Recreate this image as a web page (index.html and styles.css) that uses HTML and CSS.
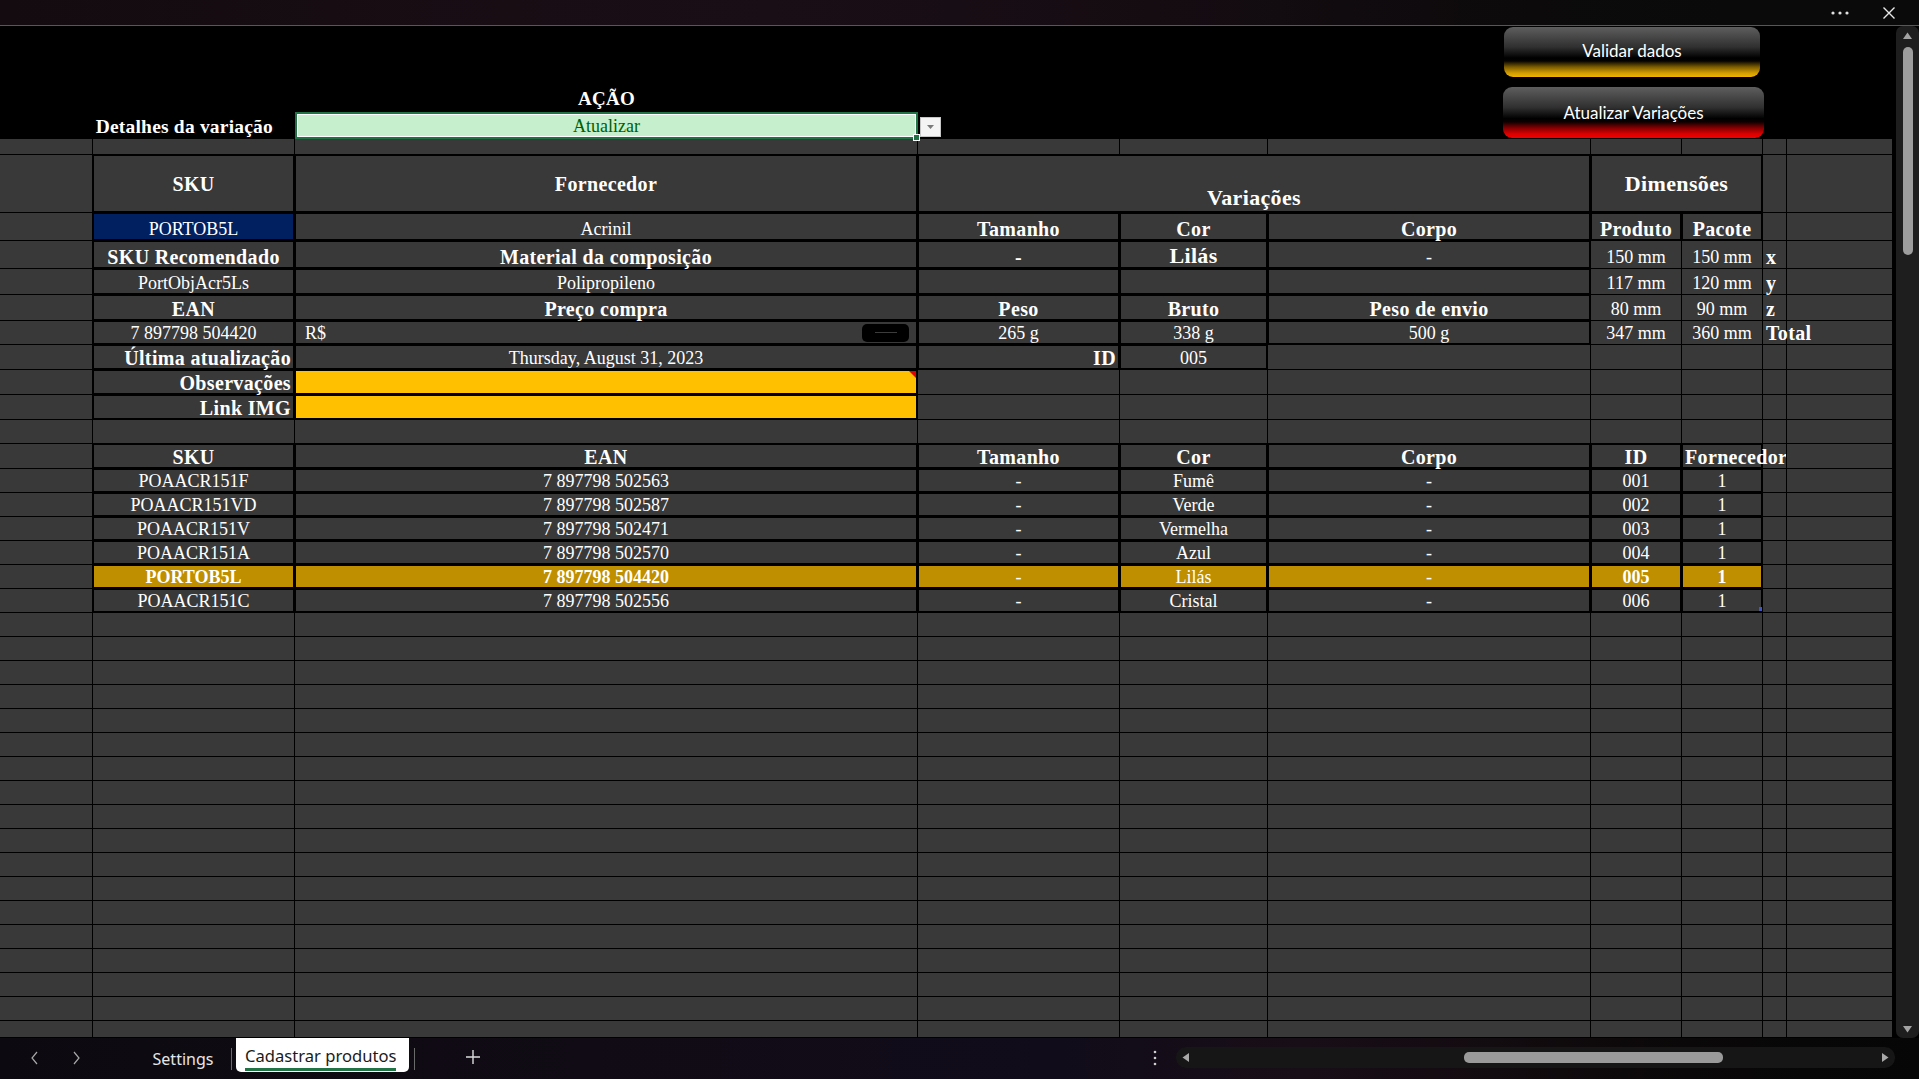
FILE: index.html
```html
<!DOCTYPE html>
<html lang="pt">
<head>
<meta charset="utf-8">
<title>Cadastrar produtos</title>
<link rel="stylesheet" href="styles.css">
</head>
<body>
<div class="app">
  <header class="titlebar">
    <svg class="ico-more" width="18" height="4" viewBox="0 0 18 4"><circle cx="2" cy="2" r="1.6"/><circle cx="9" cy="2" r="1.6"/><circle cx="16" cy="2" r="1.6"/></svg>
    <svg class="ico-close" width="12" height="12" viewBox="0 0 12 12"><path d="M0.5 0.5 L11.5 11.5 M11.5 0.5 L0.5 11.5"/></svg>
  </header>

  <div class="main">
    <div class="sheet">
      <div class="top">
        <div class="t-acao">AÇÃO</div>
        <div class="t-label">Detalhes da variação</div>
        <div class="t-action">Atualizar</div>
        <div class="t-dd"><span class="dd-btn"><svg width="7" height="4" viewBox="0 0 7 4"><path d="M0 0 H7 L3.5 4 Z"/></svg></span></div>
        <button class="shape shape-gold">Validar dados</button>
        <button class="shape shape-red">Atualizar Variações</button>
      </div>

      <div class="grid">
        <!-- r1 -->
        <div class="c"></div><div class="c"></div><div class="c"></div><div class="c"></div><div class="c"></div><div class="c"></div><div class="c"></div><div class="c"></div><div class="c"></div><div class="c"></div>
        <!-- r2 -->
        <div class="c"></div>
        <div class="c tk b mid">SKU</div>
        <div class="c tk b mid">Fornecedor</div>
        <div class="c tk b big span3 var">Variações</div>
        <div class="c tk b big mid span2">Dimensões</div>
        <div class="c"></div><div class="c"></div>
        <!-- r3 -->
        <div class="c"></div>
        <div class="c tk blue">PORTOB5L</div>
        <div class="c tk">Acrinil</div>
        <div class="c tk b">Tamanho</div>
        <div class="c tk b">Cor</div>
        <div class="c tk b">Corpo</div>
        <div class="c tk b">Produto</div>
        <div class="c tk b">Pacote</div>
        <div class="c"></div><div class="c"></div>
        <!-- r4 -->
        <div class="c"></div>
        <div class="c tk b">SKU Recomendado</div>
        <div class="c tk b">Material da composição</div>
        <div class="c tk b">-</div>
        <div class="c tk b big">Lilás</div>
        <div class="c tk">-</div>
        <div class="c">150 mm</div>
        <div class="c">150 mm</div>
        <div class="c b l">x</div>
        <div class="c"></div>
        <!-- r5 -->
        <div class="c"></div>
        <div class="c tk">PortObjAcr5Ls</div>
        <div class="c tk">Polipropileno</div>
        <div class="c tk"></div>
        <div class="c tk"></div>
        <div class="c tk"></div>
        <div class="c">117 mm</div>
        <div class="c">120 mm</div>
        <div class="c b l">y</div>
        <div class="c"></div>
        <!-- r6 -->
        <div class="c"></div>
        <div class="c tk b">EAN</div>
        <div class="c tk b">Preço compra</div>
        <div class="c tk b">Peso</div>
        <div class="c tk b">Bruto</div>
        <div class="c tk b">Peso de envio</div>
        <div class="c">80 mm</div>
        <div class="c">90 mm</div>
        <div class="c b l">z</div>
        <div class="c"></div>
        <!-- r7 -->
        <div class="c"></div>
        <div class="c tk">7 897798 504420</div>
        <div class="c tk l price"><span>R$</span><span class="redact"></span></div>
        <div class="c tk">265 g</div>
        <div class="c tk">338 g</div>
        <div class="c tk">500 g</div>
        <div class="c">347 mm</div>
        <div class="c">360 mm</div>
        <div class="c b l">Total</div>
        <div class="c"></div>
        <!-- r8 -->
        <div class="c"></div>
        <div class="c tk b r">Última atualização</div>
        <div class="c tk">Thursday, August 31, 2023</div>
        <div class="c tk b r">ID</div>
        <div class="c tk">005</div>
        <div class="c"></div><div class="c"></div><div class="c"></div><div class="c"></div><div class="c"></div>
        <!-- r9 -->
        <div class="c"></div>
        <div class="c tk b r">Observações</div>
        <div class="c tk yel note"></div>
        <div class="c"></div><div class="c"></div><div class="c"></div><div class="c"></div><div class="c"></div><div class="c"></div><div class="c"></div>
        <!-- r10 -->
        <div class="c"></div>
        <div class="c tk b r">Link IMG</div>
        <div class="c tk yel"></div>
        <div class="c"></div><div class="c"></div><div class="c"></div><div class="c"></div><div class="c"></div><div class="c"></div><div class="c"></div>
        <!-- r11 -->
        <div class="c"></div><div class="c"></div><div class="c"></div><div class="c"></div><div class="c"></div><div class="c"></div><div class="c"></div><div class="c"></div><div class="c"></div><div class="c"></div>
        <!-- r12 headers -->
        <div class="c"></div>
        <div class="c tk b">SKU</div>
        <div class="c tk b">EAN</div>
        <div class="c tk b">Tamanho</div>
        <div class="c tk b">Cor</div>
        <div class="c tk b">Corpo</div>
        <div class="c tk b">ID</div>
        <div class="c tk b l over">Fornecedor</div>
        <div class="c"></div><div class="c"></div>
        <!-- r13 -->
        <div class="c"></div>
        <div class="c tk">POAACR151F</div><div class="c tk">7 897798 502563</div><div class="c tk">-</div><div class="c tk">Fumê</div><div class="c tk">-</div><div class="c tk">001</div><div class="c tk">1</div>
        <div class="c"></div><div class="c"></div>
        <!-- r14 -->
        <div class="c"></div>
        <div class="c tk">POAACR151VD</div><div class="c tk">7 897798 502587</div><div class="c tk">-</div><div class="c tk">Verde</div><div class="c tk">-</div><div class="c tk">002</div><div class="c tk">1</div>
        <div class="c"></div><div class="c"></div>
        <!-- r15 -->
        <div class="c"></div>
        <div class="c tk">POAACR151V</div><div class="c tk">7 897798 502471</div><div class="c tk">-</div><div class="c tk">Vermelha</div><div class="c tk">-</div><div class="c tk">003</div><div class="c tk">1</div>
        <div class="c"></div><div class="c"></div>
        <!-- r16 -->
        <div class="c"></div>
        <div class="c tk">POAACR151A</div><div class="c tk">7 897798 502570</div><div class="c tk">-</div><div class="c tk">Azul</div><div class="c tk">-</div><div class="c tk">004</div><div class="c tk">1</div>
        <div class="c"></div><div class="c"></div>
        <!-- r17 highlighted -->
        <div class="c"></div>
        <div class="c tk gold sb">PORTOB5L</div><div class="c tk gold sb">7 897798 504420</div><div class="c tk gold">-</div><div class="c tk gold">Lilás</div><div class="c tk gold">-</div><div class="c tk gold sb">005</div><div class="c tk gold sb">1</div>
        <div class="c"></div><div class="c"></div>
        <!-- r18 -->
        <div class="c"></div>
        <div class="c tk">POAACR151C</div><div class="c tk">7 897798 502556</div><div class="c tk">-</div><div class="c tk">Cristal</div><div class="c tk">-</div><div class="c tk">006</div><div class="c tk handle">1</div>
        <div class="c"></div><div class="c"></div>
        <!-- empty rows r19..r36 -->
        <div class="c"></div><div class="c"></div><div class="c"></div><div class="c"></div><div class="c"></div><div class="c"></div><div class="c"></div><div class="c"></div><div class="c"></div><div class="c"></div>
        <div class="c"></div><div class="c"></div><div class="c"></div><div class="c"></div><div class="c"></div><div class="c"></div><div class="c"></div><div class="c"></div><div class="c"></div><div class="c"></div>
        <div class="c"></div><div class="c"></div><div class="c"></div><div class="c"></div><div class="c"></div><div class="c"></div><div class="c"></div><div class="c"></div><div class="c"></div><div class="c"></div>
        <div class="c"></div><div class="c"></div><div class="c"></div><div class="c"></div><div class="c"></div><div class="c"></div><div class="c"></div><div class="c"></div><div class="c"></div><div class="c"></div>
        <div class="c"></div><div class="c"></div><div class="c"></div><div class="c"></div><div class="c"></div><div class="c"></div><div class="c"></div><div class="c"></div><div class="c"></div><div class="c"></div>
        <div class="c"></div><div class="c"></div><div class="c"></div><div class="c"></div><div class="c"></div><div class="c"></div><div class="c"></div><div class="c"></div><div class="c"></div><div class="c"></div>
        <div class="c"></div><div class="c"></div><div class="c"></div><div class="c"></div><div class="c"></div><div class="c"></div><div class="c"></div><div class="c"></div><div class="c"></div><div class="c"></div>
        <div class="c"></div><div class="c"></div><div class="c"></div><div class="c"></div><div class="c"></div><div class="c"></div><div class="c"></div><div class="c"></div><div class="c"></div><div class="c"></div>
        <div class="c"></div><div class="c"></div><div class="c"></div><div class="c"></div><div class="c"></div><div class="c"></div><div class="c"></div><div class="c"></div><div class="c"></div><div class="c"></div>
        <div class="c"></div><div class="c"></div><div class="c"></div><div class="c"></div><div class="c"></div><div class="c"></div><div class="c"></div><div class="c"></div><div class="c"></div><div class="c"></div>
        <div class="c"></div><div class="c"></div><div class="c"></div><div class="c"></div><div class="c"></div><div class="c"></div><div class="c"></div><div class="c"></div><div class="c"></div><div class="c"></div>
        <div class="c"></div><div class="c"></div><div class="c"></div><div class="c"></div><div class="c"></div><div class="c"></div><div class="c"></div><div class="c"></div><div class="c"></div><div class="c"></div>
        <div class="c"></div><div class="c"></div><div class="c"></div><div class="c"></div><div class="c"></div><div class="c"></div><div class="c"></div><div class="c"></div><div class="c"></div><div class="c"></div>
        <div class="c"></div><div class="c"></div><div class="c"></div><div class="c"></div><div class="c"></div><div class="c"></div><div class="c"></div><div class="c"></div><div class="c"></div><div class="c"></div>
        <div class="c"></div><div class="c"></div><div class="c"></div><div class="c"></div><div class="c"></div><div class="c"></div><div class="c"></div><div class="c"></div><div class="c"></div><div class="c"></div>
        <div class="c"></div><div class="c"></div><div class="c"></div><div class="c"></div><div class="c"></div><div class="c"></div><div class="c"></div><div class="c"></div><div class="c"></div><div class="c"></div>
        <div class="c"></div><div class="c"></div><div class="c"></div><div class="c"></div><div class="c"></div><div class="c"></div><div class="c"></div><div class="c"></div><div class="c"></div><div class="c"></div>
        <div class="c"></div><div class="c"></div><div class="c"></div><div class="c"></div><div class="c"></div><div class="c"></div><div class="c"></div><div class="c"></div><div class="c"></div><div class="c"></div>
      </div>
    </div>

    <div class="vscroll">
      <div class="vtrack">
        <svg class="varrow" width="11" height="7" viewBox="0 0 11 7"><path d="M1 7 L5.5 0.5 L10 7 Z"/></svg>
        <div class="vthumb"></div>
        <div class="vfill"></div>
        <svg class="varrow" width="11" height="7" viewBox="0 0 11 7"><path d="M1 0 L5.5 6.5 L10 0 Z"/></svg>
      </div>
    </div>
  </div>

  <footer class="tabbar">
    <svg class="nav nav-prev" width="12" height="14" viewBox="0 0 12 14"><path d="M8 1 L3 7 L8 13"/></svg>
    <svg class="nav nav-next" width="12" height="14" viewBox="0 0 12 14"><path d="M4 1 L9 7 L4 13"/></svg>
    <div class="tab">Settings</div>
    <div class="tsep"></div>
    <div class="tab tab-active"><span class="tab-label">Cadastrar produtos</span></div>
    <div class="tsep tsep2"></div>
    <svg class="plus" width="14" height="14" viewBox="0 0 14 14"><path d="M7 0 V14 M0 7 H14"/></svg>
    <svg class="kebab" width="4" height="16" viewBox="0 0 4 16"><circle cx="2" cy="2" r="1.3"/><circle cx="2" cy="8" r="1.3"/><circle cx="2" cy="14" r="1.3"/></svg>
    <div class="htrack">
      <svg class="harrow" width="7" height="11" viewBox="0 0 7 11"><path d="M7 1 L0.5 5.5 L7 10 Z"/></svg>
      <div class="hthumb"></div>
      <svg class="harrow" width="7" height="11" viewBox="0 0 7 11"><path d="M0 1 L6.5 5.5 L0 10 Z"/></svg>
    </div>
  </footer>
</div>
</body>
</html>
```

FILE: styles.css
```css
* { box-sizing: border-box; }

html, body {
  margin: 0;
  padding: 0;
  background: #000;
  overflow: hidden;
}

.app {
  width: 1919px;
  height: 1079px;
  display: flex;
  flex-direction: column;
  font-family: "Liberation Serif", "Times New Roman", serif;
}

/* ---------- title bar ---------- */
.titlebar {
  height: 26px;
  flex: none;
  border-bottom: 1px solid #575757;
  background: linear-gradient(90deg, #130b0f 0%, #1a0e16 40%, #150c12 60%, #0c0a0b 80%, #0a0a0a 100%);
  display: flex;
  align-items: center;
  justify-content: flex-end;
  gap: 34px;
  padding-right: 24px;
}
.ico-more { fill: #e0e0e0; }
.ico-close path { stroke: #e8e8e8; stroke-width: 1.4; fill: none; }

/* ---------- main area ---------- */
.main {
  height: 1012px;
  flex: none;
  display: flex;
}

.sheet {
  width: 1893px;
  flex: none;
  display: flex;
  flex-direction: column;
}

/* black header block */
.top {
  position: relative;
  height: 113px;
  flex: none;
  background: #000;
  display: grid;
  grid-template-columns: 93px 202px 623px 1fr;
  grid-template-rows: 62px 24px 27px;
  color: #fff;
}
.t-acao {
  grid-column: 3;
  grid-row: 2;
  display: flex;
  align-items: flex-end;
  justify-content: center;
  font-weight: 700;
  font-size: 19px;
  line-height: 20px;
  letter-spacing: 0.3px;
  padding-bottom: 3px;
}
.t-label {
  grid-column: 2;
  grid-row: 3;
  display: flex;
  align-items: flex-end;
  justify-content: flex-end;
  font-weight: 700;
  font-size: 19.5px;
  line-height: 22px;
  letter-spacing: 0.2px;
  padding: 0 22px 1px 0;
  white-space: nowrap;
}
.t-action {
  position: relative;
  grid-column: 3;
  grid-row: 3;
  background: #c6efce;
  border: 2px solid #217346;
  box-shadow: inset 0 0 0 1px #ffffff;
  color: #006100;
  font-size: 18px;
  line-height: 20px;
  display: flex;
  align-items: flex-end;
  justify-content: center;
  padding-bottom: 1px;
}
.t-action::after {
  content: "";
  position: absolute;
  right: -4px;
  bottom: -4px;
  width: 5px;
  height: 5px;
  background: #217346;
  border: 1px solid #fff;
}
.t-dd {
  grid-column: 4;
  grid-row: 3;
  padding: 5px 0 0 2px;
}
.dd-btn {
  display: flex;
  align-items: center;
  justify-content: center;
  width: 21px;
  height: 20px;
  background: #f4f4f4;
  border: 1px solid #c6c6c6;
}
.dd-btn svg { fill: #7a7a7a; }

/* floating macro buttons (shapes over the sheet) */
.shape {
  position: absolute;
  border: none;
  border-radius: 9px;
  color: #fff;
  font-family: Lato, "Open Sans", sans-serif;
  font-size: 17px;
  padding: 0;
  cursor: pointer;
}
.shape-gold {
  left: 1504px;
  top: 1px;
  width: 256px;
  height: 50px;
  padding-bottom: 3px;
  background: linear-gradient(180deg, #5e5e5e 0%, #303030 40%, #000 62%, #050300 68%, #7c5c00 80%, #d39c00 92%, #f0b400 100%);
}
.shape-red {
  left: 1503px;
  top: 61px;
  width: 261px;
  height: 51px;
  background: linear-gradient(180deg, #5e5e5e 0%, #303030 40%, #000 62%, #0a0000 68%, #800000 80%, #dc0000 92%, #f20000 100%);
}

/* ---------- spreadsheet grid ---------- */
.grid {
  height: 899px;
  flex: none;
  display: grid;
  grid-template-columns: 93px 202px 623px 202px 148px 323px 91px 81px 24px 106px;
  grid-template-rows: 16px 58px 28px 28px 26px 26px 24px 25px 25px 25px 24px 25px repeat(23, 24px) 17px;
  background: #3a393a;
  overflow: hidden;
}

.c {
  border-right: 1px solid #000;
  border-bottom: 1px solid #000;
  display: flex;
  align-items: flex-end;
  justify-content: center;
  padding: 0 3px 1px;
  color: #fff;
  font-size: 18px;
  line-height: 20px;
  white-space: nowrap;
  min-width: 0;
}

.tk { box-shadow: inset 0 0 0 1px #000; }
.b { font-weight: 700; font-size: 20px; line-height: 22px; letter-spacing: 0.35px; padding-bottom: 0; }
.sb { font-weight: 700; }
.big { font-size: 22px; line-height: 24px; padding-bottom: 0; }
.l { justify-content: flex-start; }
.r { justify-content: flex-end; }
.mid { align-items: center; padding-bottom: 0; }
.span3 { grid-column: span 3; }
.span2 { grid-column: span 2; }
.var { padding-bottom: 2px; }

.blue { background: #002060; }
.yel { background: #ffc000; }
.gold { background: #bf8f00; }

.over { overflow: visible; }

.price {
  padding-left: 10px;
  padding-right: 8px;
}
.redact {
  margin-left: auto;
  align-self: center;
  width: 47px;
  height: 18px;
  margin-bottom: -1px;
  background: #000;
  border-radius: 5px;
  display: flex;
  align-items: center;
  justify-content: center;
}
.redact::before {
  content: "";
  width: 22px;
  height: 1px;
  background: #3c3c3c;
}

.note { position: relative; }
.note::after {
  content: "";
  position: absolute;
  top: 1px;
  right: 1px;
  border-left: 7px solid transparent;
  border-top: 7px solid #e00000;
}

.handle { position: relative; }
.handle::after {
  content: "";
  position: absolute;
  right: 0;
  bottom: 1px;
  width: 3px;
  height: 4px;
  background: #3f57c8;
}

/* ---------- vertical scrollbar ---------- */
.vscroll {
  width: 26px;
  flex: none;
  background: #000;
  padding-left: 3px;
}
.vtrack {
  height: 100%;
  background: #1e1e1e;
  border-radius: 7px;
  display: flex;
  flex-direction: column;
  align-items: center;
  padding: 6px 0 5px;
}
.varrow { fill: #a3a3a3; flex: none; }
.vthumb {
  margin-top: 8px;
  width: 10px;
  height: 208px;
  border-radius: 5px;
  background: #9d9d9d;
  flex: none;
}
.vfill { flex: 1; }

/* ---------- bottom tab bar ---------- */
.tabbar {
  height: 41px;
  flex: none;
  display: flex;
  align-items: flex-start;
  background: linear-gradient(90deg, #0c0a10 0%, #100b14 30%, #110c1a 55%, #180e17 68%, #120b0f 78%, #0a0808 88%, #060606 100%);
  font-family: "Noto Sans", "Open Sans", sans-serif;
}
.nav { flex: none; margin-top: 13px; }
.nav path { stroke: #a8a8a8; stroke-width: 1.2; fill: none; }
.nav-prev { margin-left: 29px; }
.nav-next { margin-left: 29px; }

.tab {
  flex: none;
  color: #e6e6e6;
  font-size: 16px;
  line-height: 22px;
  margin-left: 56px;
  width: 90px;
  text-align: center;
  margin-top: 10px;
}
.tsep {
  flex: none;
  width: 1px;
  height: 22px;
  margin-top: 10px;
  margin-left: 3px;
  background: #6a6a6a;
}
.tsep2 { margin-left: 5px; }
.tab-active {
  margin-left: 4px;
  margin-top: 0;
  width: 173px;
  height: 34px;
  background: #fff;
  border-radius: 0 0 5px 5px;
  text-align: left;
  padding: 7px 0 0 9px;
  color: #1b1b1b;
  font-size: 16.6px;
}
.tab-label {
  display: inline-block;
  line-height: 20px;
  padding-bottom: 2px;
  border-bottom: 3px solid #217346;
}
.plus { flex: none; margin: 12px 0 0 51px; }
.plus path { stroke: #dcdcdc; stroke-width: 1.4; fill: none; }
.kebab { flex: none; margin: 12px 0 0 673px; fill: #cfcfcf; }

.htrack {
  flex: none;
  margin: 9px 0 0 19px;
  width: 719px;
  height: 21px;
  border-radius: 10px;
  background: #161616;
  display: flex;
  align-items: center;
  padding: 0 6px;
}
.harrow { fill: #a8a8a8; flex: none; }
.hthumb {
  width: 259px;
  height: 11px;
  border-radius: 5px;
  background: #9a9a9a;
  margin-left: 275px;
  margin-right: auto;
}
```
